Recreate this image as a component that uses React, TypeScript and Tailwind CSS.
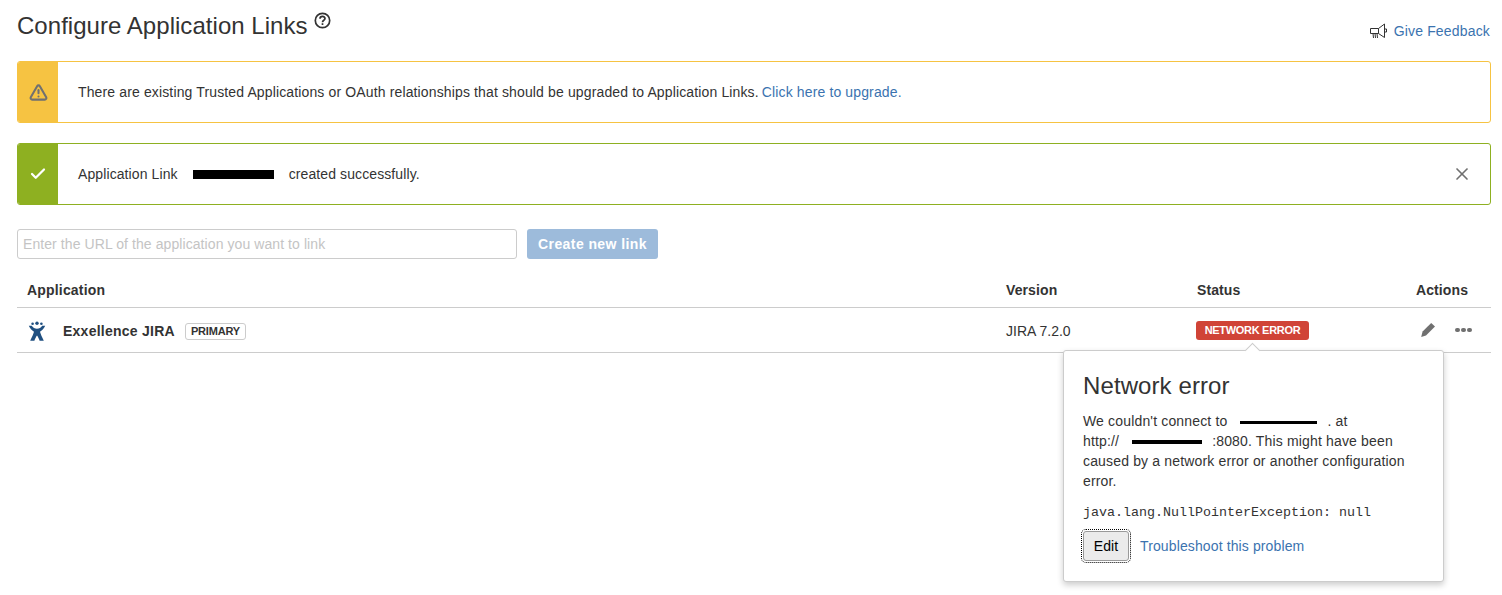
import { AlertTriangle, Check, X } from 'lucide-react';

const Redacted = ({ className }: { className: string }) => (
  <span className={`inline-block bg-black align-middle ${className}`} />
);

const JiraLogo = () => (
  <svg width="20" height="20" viewBox="0 0 20 20" fill="#205081">
    <circle cx="10" cy="2.2" r="1.7" />
    <circle cx="5.6" cy="2.8" r="1.3" />
    <circle cx="14.4" cy="2.8" r="1.3" />
    <path d="M1.8 4.8 C3 8 5.4 9.6 7 10.8 C6.4 13 5 16 3.2 19.8 L7.4 19.8 C8 17.6 9 15.8 10 14.4 C11 15.8 12 17.6 12.6 19.8 L16.8 19.8 C15 16 13.6 13 13 10.8 C14.6 9.6 17 8 18.2 4.8 L15.2 4.8 C14 6.8 12.2 7.8 10 7.8 C7.8 7.8 6 6.8 4.8 4.8 Z" />
  </svg>
);

const Megaphone = () => (
  <svg width="18" height="16" viewBox="0 0 18 16" fill="none" stroke="#333" strokeWidth="1">
    <path d="M0.5 5.5 H8.5 L14.5 1 V14.5 L8.5 10.5 H0.5 Z" />
    <path d="M8.5 5.5 V10.5" />
    <path d="M14.5 6 H16.5 V9 H14.5" />
    <path d="M3 10.5 L3.5 15 M5 10.5 L5.5 15 M7 10.5 L7.5 15" />
  </svg>
);

const HelpIcon = () => (
  <svg width="17" height="17" viewBox="0 0 17 17" fill="none" stroke="#333" strokeWidth="1.7">
    <circle cx="8.5" cy="8.5" r="7.2" />
    <path d="M6 6.8 C6 3.7 11 3.7 11 6.6 C11 8.3 8.5 8.3 8.5 10.2" />
    <path d="M8.5 11.2 V13" />
  </svg>
);

const Pencil = () => (
  <svg width="14" height="14" viewBox="0 0 14 14" fill="#707070">
    <path d="M10.2 0 L14 3.6 L5 12.4 L0.2 14 L1.6 8.6 Z" />
  </svg>
);

export default function App() {
  return (
    <div className="relative h-[595px] overflow-hidden bg-white pr-[11px] pl-[17px] font-['Liberation_Sans',Arial,sans-serif] text-sm tracking-[0.1px] text-[#333]">
      <div className="flex h-[61px] justify-between">
        <div className="flex items-start pt-[11px]">
          <h1 className="text-2xl leading-[30px] font-normal tracking-[0.04px]">Configure Application Links</h1>
          <span className="mt-[1px] ml-[6px]">
            <HelpIcon />
          </span>
        </div>
        <a className="mt-[21px] mr-[1px] flex h-5 items-center gap-[6px] tracking-[0.17px] text-[#3b73af]">
          <Megaphone />
          Give Feedback
        </a>
      </div>

      <div className="flex h-[62px] rounded-[3px] border border-[#f6c342]">
        <div className="flex w-10 items-center justify-center rounded-l-[2px] bg-[#f6c342]">
          <AlertTriangle size={19} strokeWidth={2.6} className="text-[#707070]" />
        </div>
        <p className="flex items-center pl-5 tracking-[0.135px]">
          There are existing Trusted Applications or OAuth relationships that should be upgraded to Application Links.
          <a className="ml-[3px] text-[#3b73af]">Click here to upgrade.</a>
        </p>
      </div>

      <div className="mt-5 flex h-[62px] items-stretch rounded-[3px] border border-[#8eb021]">
        <div className="flex w-10 items-center justify-center rounded-l-[2px] bg-[#8eb021]">
          <Check size={18} strokeWidth={3} className="text-white" />
        </div>
        <p className="flex flex-1 items-center pl-5">
          Application Link
          <Redacted className="mr-[15px] ml-[15px] h-[9px] w-[81px]" />
          created successfully.
        </p>
        <div className="flex w-[56px] items-center justify-center">
          <X size={20} strokeWidth={2} className="text-[#707070]" />
        </div>
      </div>

      <div className="mt-6 flex gap-[10px]">
        <input
          className="h-[30px] w-[500px] rounded-[3px] border border-[#cccccc] px-[5px] text-sm tracking-[0.08px] placeholder:text-[#c4c4c4]"
          placeholder="Enter the URL of the application you want to link"
        />
        <button className="h-[30px] w-[131px] rounded-[3px] bg-[#9dbbdb] text-sm font-bold tracking-[0.42px] text-white">
          Create new link
        </button>
      </div>

      <div className="mt-[18px] grid h-[31px] grid-cols-[979px_191px_219px_1fr] border-b border-[#cccccc] pl-[10px] font-bold tracking-[0.1px]">
        <div className="leading-[26px] tracking-[0.18px]">Application</div>
        <div className="leading-[26px]">Version</div>
        <div className="leading-[26px]">Status</div>
        <div className="leading-[26px]">Actions</div>
      </div>

      <div className="grid h-[45px] grid-cols-[979px_190px_220px_1fr] items-center border-b border-[#cccccc] pl-[10px]">
        <div className="flex items-center pt-[2px]">
          <JiraLogo />
          <span className="ml-4 font-bold tracking-[0.25px]">Exxellence JIRA</span>
          <span className="ml-[10px] h-[17px] w-[61px] rounded-[3px] border border-[#cccccc] text-center text-[11px] leading-[15px] font-bold tracking-[-0.2px]">
            PRIMARY
          </span>
        </div>
        <div className="pt-[2px] tracking-normal">JIRA 7.2.0</div>
        <div>
          <span className="mt-[1px] block h-[19px] w-[113px] rounded-[3px] bg-[#d04437] text-center text-[11px] leading-[19px] font-bold tracking-[-0.3px] text-white">
            NETWORK ERROR
          </span>
        </div>
        <div className="flex items-center gap-5 pl-[5px]">
          <Pencil />
          <span className="flex gap-[1.5px]">
            <i className="size-[4.5px] rounded-full bg-[#707070]" />
            <i className="size-[4.5px] rounded-full bg-[#707070]" />
            <i className="size-[4.5px] rounded-full bg-[#707070]" />
          </span>
        </div>
      </div>

      <div className="absolute top-[350px] left-[1063px] h-[232px] w-[381px] rounded-[3px] border border-[#cccccc] bg-white px-[19px] pt-5 shadow-[0_3px_6px_rgba(0,0,0,0.2)]">
        <span className="absolute -top-[6px] left-[183px] size-[11px] rotate-45 border-t border-l border-[#cccccc] bg-white" />
        <h2 className="text-2xl leading-[30px] font-normal">Network error</h2>
        <p className="mt-[10px] leading-5 tracking-[0.16px]">
          We couldn't connect to
          <Redacted className="mr-[10px] ml-[13px] h-[3px] w-[77px]" />
          . at
          <br />
          http://
          <Redacted className="mr-[10px] ml-[13px] h-1 w-[70px]" />
          :8080. This might have been
          <br />
          caused by a network error or another configuration
          <br />
          error.
        </p>
        <p className="mt-[12px] font-['Liberation_Mono',monospace] text-[13.33px] leading-5 tracking-normal">
          java.lang.NullPointerException: null
        </p>
        <div className="mt-[8px] flex items-center">
          <button className="h-[30px] w-[46px] rounded-[3px] border border-[#999] bg-[#ebebeb] text-sm text-black outline-1 outline-offset-[1px] outline-black outline-dotted">
            Edit
          </button>
          <a className="ml-[11px] tracking-[0.12px] text-[#3b73af]">Troubleshoot this problem</a>
        </div>
      </div>
    </div>
  );
}
